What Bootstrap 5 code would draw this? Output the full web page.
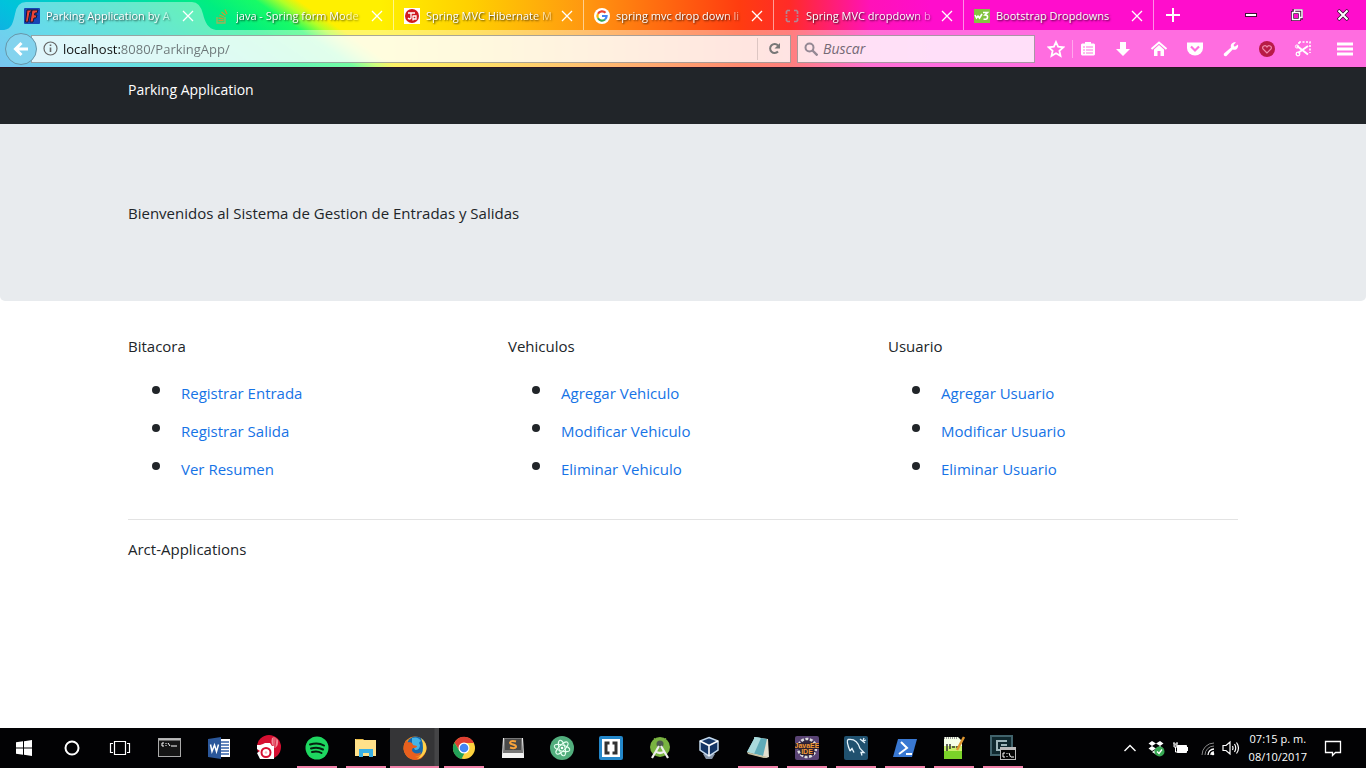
<!DOCTYPE html>
<html lang="es">
<head>
<meta charset="utf-8">
<meta name="viewport" content="width=device-width, initial-scale=1">
<title>Parking Application</title>
<link href="https://cdn.jsdelivr.net/npm/bootstrap@5.3.0/dist/css/bootstrap.min.css" rel="stylesheet">
<style>
body{font-family:"Open Sans","Noto Sans",sans-serif;font-size:15px;line-height:24px;color:#212529;background:#fff}
button{border:0;background:none;padding:0;color:inherit}
svg{display:block;flex:none}
/* browser chrome */
.chrome{border-bottom:1px solid #2a1424;
 background:
 linear-gradient(90deg,#fff0 0 380px,#ffd000 470px,#ff9a10 580px,#ff3c10 740px,#ff2b28 790px,#ff12b8 870px,#ff0dcc 930px),
 linear-gradient(34deg,#1f9fe8 0,#00c3dc 56px,#00d8b0 120px,#00ee80 170px,#18fb66 198px,#b0ff28 212px,#fff000 222px)}
.tabstrip{height:30px;padding-left:14px;font-size:11px;line-height:18px}
.btab{width:190px;height:30px;padding:2px 10px 0;color:#fff;position:relative}
.btab button{flex:none}
.btab a{color:#fff;text-decoration:none;text-shadow:1px 1px 2px #000c;white-space:nowrap;margin-left:6px;width:134px;-webkit-mask-image:linear-gradient(90deg,#000 106px,#0003 132px);mask-image:linear-gradient(90deg,#000 106px,#0003 132px)}
.btab a.whole{-webkit-mask-image:none;mask-image:none}
.btab svg.fav{width:16px;height:16px}
.divided{border-right:1px solid #fff8}
.btab.current::before{content:"";position:absolute;top:2px;left:-10px;width:212px;height:28px;background:#ffffff66;clip-path:path("M0 28C8 27 9 20 11 12Q13 0 22 0H188Q196 0 199 12C201 20 204 27 212 28Z")}
.btab.current>*{position:relative}
.winbtns{padding-right:17px;gap:34px}
.toolbar{height:37px;background:#ffffff66;padding:0 12px 0 5px}
.backbtn{width:32px;height:32px;border-radius:50%;background:#83d3ee;border:1px solid #6796a8;z-index:1;display:grid;place-items:center;flex:none}
.urlbar{height:28px;border:1px solid #0005;background:#ffffffc8;margin-left:-6px;padding-left:11px}
.urlbar input{border:0;outline:0;font-size:13px;line-height:20px;padding:0;margin-left:5px;min-width:0;color:#555;
 background:linear-gradient(90deg,#111 57px,#6c7678 57px);-webkit-background-clip:text;background-clip:text;-webkit-text-fill-color:transparent}
.reload{border-left:1px solid #0002;height:22px;width:33px;display:grid;place-items:center}
.searchbar{width:238px;height:28px;border:1px solid #0005;background:#ffffffc8;margin:0 12px 0 6px;padding-left:6px;gap:5px}
.searchbar input{border:0;outline:0;background:none;font-size:14px;font-style:italic;padding:0;min-width:0}
.searchbar input::placeholder{color:#756975;opacity:1}
.tools{color:#fff;gap:18px}
.tools .paired{border-left:1px solid #fff6;padding-left:7px;margin-left:-11px}
.tools .menu{margin-left:6px}
/* application */
.container{--bs-gutter-x:30px;max-width:1140px}
.row{--bs-gutter-x:30px}
.topbar{background:#212529;color:#fff;height:56px;padding-top:9px}
.topbar a{color:#fff;text-decoration:none;font-size:14px}
.hero{background:#e8ebee;border-radius:0 0 5px 5px;padding:77px 0 76px;margin-bottom:33px}
.links{list-style:none;margin:16px 0 31px;padding:0 0 0 24px}
.links li{display:flex;padding:7px 0}
.links li::before{content:"";width:8px;height:8px;border-radius:50%;background:#212529;margin:5px 21px 0 0}
.links a{color:#1673e6;text-decoration:none}
.rule{border:0;border-top:1px solid #e3e3e3;opacity:1;margin:0 0 17px}
/* desktop taskbar */
.taskbar{height:40px;background:#020204;color:#fff}
.taskbar .app{width:49px;height:40px;display:grid;place-items:center;flex:none;position:relative}
.taskbar .shell{width:48px}
.taskbar .shell+.app:not(.shell){margin-left:1px}
.taskbar .run::after{content:"";position:absolute;left:5px;right:4px;bottom:0;height:2px;background:#f080a8}
.taskbar .front{background:linear-gradient(90deg,#353537 44px,#454547 45px)}
.taskbar .front::after{left:0;right:0}
.tray{font-size:11px;line-height:18px;gap:7px;padding-right:24px}
.tray time{text-align:center;margin:0 10px 0 2px;white-space:nowrap}
</style>
</head>
<body class="d-flex flex-column min-vh-100">
<header class="chrome">
 <div class="tabstrip d-flex">
  <div class="btab current d-flex align-items-center">
   <svg class="fav" viewBox="0 0 16 16"><rect width="16" height="16" rx="1" fill="#1746b4"/><path d="M3 2h5l-1 2H6L4 14H1.500zM8 2h6l-1 3h-2l-.5 2H13l-1 3h-2l-1 4H6z" fill="#f04434" stroke="#181838"/></svg>
   <a href="#">Parking Application by A</a><button class="ms-auto" aria-label="Cerrar"><svg width="12" height="12"><path d="M1 1l10 10M11 1L1 11" stroke="#fff" stroke-width="1.3"/></svg></button></div>
  <div class="btab d-flex align-items-center divided">
   <svg class="fav" viewBox="0 0 16 16"><path d="M3 9v6h8V9" fill="none" stroke="#9fb05b" stroke-width="1.300"/><path d="M4.500 12.700h5M4.500 10l5 .8M5.500 7l4.500 2M7.500 4l4 3.200M11 1.500l2 4.500" stroke="#c89a30" stroke-width="1.300"/></svg>
   <a href="#">java - Spring form Mode</a><button class="ms-auto" aria-label="Cerrar"><svg width="12" height="12"><path d="M1 1l10 10M11 1L1 11" stroke="#fff" stroke-width="1.3"/></svg></button></div>
  <div class="btab d-flex align-items-center divided">
   <svg class="fav" viewBox="0 0 16 16"><rect width="16" height="16" fill="#fff"/><circle cx="8" cy="8" r="7" fill="#d01c22"/><path d="M4 5h7M7 5v5q-1 2-3 0M9 7.500v5M9 8h3v3H9" fill="none" stroke="#fff" stroke-width="1.300"/></svg>
   <a href="#">Spring MVC Hibernate M</a><button class="ms-auto" aria-label="Cerrar"><svg width="12" height="12"><path d="M1 1l10 10M11 1L1 11" stroke="#fff" stroke-width="1.3"/></svg></button></div>
  <div class="btab d-flex align-items-center divided">
   <svg class="fav" viewBox="0 0 16 16"><circle cx="8" cy="8" r="8" fill="#fff"/><g fill="none" stroke-width="2.200"><path d="M11.500 4.800A4.600 4.600 0 0 0 4 5.800" stroke="#ea4335"/><path d="M4 5.800a4.600 4.600 0 0 0 0 4.500" stroke="#fbbc05"/><path d="M4 10.300a4.600 4.600 0 0 0 7 1.200" stroke="#34a853"/><path d="M11 11.500Q12.600 10 12.600 8H8" stroke="#4285f4"/></g></svg>
   <a href="#">spring mvc drop down li</a><button class="ms-auto" aria-label="Cerrar"><svg width="12" height="12"><path d="M1 1l10 10M11 1L1 11" stroke="#fff" stroke-width="1.3"/></svg></button></div>
  <div class="btab d-flex align-items-center divided">
   <svg class="fav" viewBox="0 0 16 16"><path d="M6 2.500H3.500l-1 1V6M2.500 10v2.500l1 1H6M10 2.500h2.500l1 1V6M13.500 10v2.500l-1 1H10M2.500 7.300v1.400M13.500 7.300v1.400" fill="none" stroke="#b08a96" stroke-width="1.700"/></svg>
   <a href="#">Spring MVC dropdown b</a><button class="ms-auto" aria-label="Cerrar"><svg width="12" height="12"><path d="M1 1l10 10M11 1L1 11" stroke="#fff" stroke-width="1.3"/></svg></button></div>
  <div class="btab d-flex align-items-center divided">
   <svg class="fav" viewBox="0 0 16 16"><rect y="1" width="16" height="14" fill="#84c441"/><path d="M1 7l1.500 3L4 8l1.500 2L8 6M9 4.500h4.500L11 7q3 0 2.500 2.500T9.500 11" fill="none" stroke="#fff" stroke-width="1.600"/></svg>
   <a href="#" class="whole">Bootstrap Dropdowns</a><button class="ms-auto" aria-label="Cerrar"><svg width="12" height="12"><path d="M1 1l10 10M11 1L1 11" stroke="#fff" stroke-width="1.3"/></svg></button></div>
  <button class="ms-2 ps-1" aria-label="Nueva pestaña"><svg width="14" height="14"><path d="M7 0v14M0 7h14" stroke="#fff" stroke-width="2"/></svg></button>
  <div class="winbtns ms-auto d-flex align-items-center">
   <button aria-label="Minimizar"><svg width="12" height="12"><rect x=".5" y="4.500" width="11" height="3" fill="#fff" stroke="#401038"/></svg></button>
   <button aria-label="Restaurar"><svg width="12" height="12"><path d="M3 3V1h8v8H9M1.500 3.500h7v7h-7z" fill="none" stroke="#401038" stroke-width="3"/><path d="M3.500 3V1H11v7.500H9M1.500 3.500h7v7h-7z" fill="none" stroke="#fff" stroke-width="1.500"/></svg></button>
   <button aria-label="Cerrar ventana"><svg width="12" height="12"><path d="M1 1l10 10M11 1L1 11" stroke="#401038" stroke-width="3.600"/><path d="M1.500 1.500l9 9M10.500 1.500l-9 9" stroke="#fff" stroke-width="2"/></svg></button>
  </div>
 </div>
 <div class="toolbar d-flex align-items-center">
  <button class="backbtn" aria-label="Atrás"><svg width="16" height="16"><path d="M15 8H3M8.500 2L2.500 8l6 6" fill="none" stroke="#fff" stroke-width="3"/></svg></button>
  <div class="urlbar d-flex align-items-center flex-grow-1">
   <svg width="15" height="15"><circle cx="7.500" cy="7.500" r="6.500" fill="none" stroke="#666" stroke-width="1.200"/><path d="M7.500 6.500V11M7.500 3.500v1.600" stroke="#666" stroke-width="1.600"/></svg>
   <input class="flex-grow-1" type="text" aria-label="Dirección" value="localhost:8080/ParkingApp/">
   <button class="reload" aria-label="Recargar"><svg width="13" height="13"><path d="M10 9.500A4.500 4.500 0 1 1 10 3.500" fill="none" stroke="#777" stroke-width="2"/><path d="M12 1v5.500H6.500z" fill="#777"/></svg></button>
  </div>
  <div class="searchbar d-flex align-items-center">
   <svg width="14" height="14"><circle cx="5.500" cy="5.500" r="4" fill="none" stroke="#948894" stroke-width="2"/><path d="M8.500 8.500l5 5" stroke="#948894" stroke-width="2.400"/></svg>
   <input class="flex-grow-1" type="text" aria-label="Buscar" placeholder="Buscar">
  </div>
  <div class="tools d-flex align-items-center">
   <button aria-label="Marcador"><svg width="18" height="18"><path d="M9 2l2.100 4.700 5.200.6-3.900 3.500 1.100 5.100L9 13.300l-4.500 2.600 1.100-5.100-3.900-3.500 5.200-.6z" fill="none" stroke="#fff" stroke-width="1.800"/></svg></button>
   <button class="paired" aria-label="Lista"><svg width="16" height="18"><path d="M2 3.500h3V2h6v1.500h3l1 1v10l-1 1H2l-1-1v-10z" fill="#fff"/><path d="M3 7h2M6 7h7M3 10h2M6 10h7M3 13h2M6 13h7" stroke="#ff6fdf"/></svg></button>
   <button aria-label="Descargas"><svg width="18" height="18"><path d="M6 2h6v7h4l-7 7-7-7h4z" fill="#fff"/></svg></button>
   <button aria-label="Inicio"><svg width="18" height="18"><path d="M1.500 9L9 2.500 16.500 9" fill="none" stroke="#fff" stroke-width="2"/><path d="M4 9.500l5-4.500 5 4.500V16h-3.500v-5h-3v5H4z" fill="#fff"/></svg></button>
   <button aria-label="Pocket"><svg width="18" height="18"><path d="M1 2.500h16V8a8 7.500 0 0 1-16 0z" fill="#fff"/><path d="M5 6.500l4 4 4-4" fill="none" stroke="#ff6fdf" stroke-width="2.200"/></svg></button>
   <button aria-label="Herramientas"><svg width="18" height="18"><path d="M2 13.500L9 7.500C8 4 11 1.500 14 2.300L11.500 5l1.200 1.700L16 4.500c.7 4-2 6-5.300 5L4.500 16c-1.500 1-3.500-.800-2.500-2.500z" fill="#fff"/></svg></button>
   <button aria-label="Favorito"><svg width="18" height="18"><circle cx="9" cy="9" r="8" fill="#b81b46"/><path d="M9 13L5 9C3.500 6 7.500 4.500 9 7c1.500-2.500 5.500-1 4 2z" fill="none" stroke="#f18cae" stroke-width="1.200"/></svg></button>
   <button aria-label="Captura"><svg width="18" height="18"><path d="M5 2h11v11M5 2v3" fill="none" stroke="#fff" stroke-width="1.600" stroke-dasharray="2 1.500"/><path d="M3 6l11 8.500M14 6L4 13" stroke="#fff" stroke-width="2"/><circle cx="3" cy="6.500" r="1.600" fill="none" stroke="#fff"/><circle cx="4" cy="14" r="1.800" fill="none" stroke="#fff" stroke-width="1.300"/></svg></button>
   <button class="menu" aria-label="Menú"><svg width="18" height="18"><path d="M1 4h16M1 9h16M1 14h16" stroke="#fff" stroke-width="3"/></svg></button>
  </div>
 </div>
</header>

<nav class="topbar"><div class="container"><a href="#">Parking Application</a></div></nav>
<section class="hero"><div class="container"><p class="m-0">Bienvenidos al Sistema de Gestion de Entradas y Salidas</p></div></section>
<main class="container flex-grow-1">
 <div class="row">
  <div class="col-4"><p class="m-0">Bitacora</p>
   <ul class="links"><li><a href="#">Registrar Entrada</a></li><li><a href="#">Registrar Salida</a></li><li><a href="#">Ver Resumen</a></li></ul></div>
  <div class="col-4"><p class="m-0">Vehiculos</p>
   <ul class="links"><li><a href="#">Agregar Vehiculo</a></li><li><a href="#">Modificar Vehiculo</a></li><li><a href="#">Eliminar Vehiculo</a></li></ul></div>
  <div class="col-4"><p class="m-0">Usuario</p>
   <ul class="links"><li><a href="#">Agregar Usuario</a></li><li><a href="#">Modificar Usuario</a></li><li><a href="#">Eliminar Usuario</a></li></ul></div>
 </div>
 <hr class="rule">
 <p class="m-0">Arct-Applications</p>
</main>

<footer class="taskbar d-flex align-items-center">
 <button class="app shell" aria-label="Inicio"><svg width="16" height="16"><path d="M0 2.300l7-1V7.500H0zM8 1.200L16 0v7.500H8zM0 8.500h7v6.200l-7-1zM8 8.500h8V16l-8-1.200z" fill="#fff"/></svg></button>
 <button class="app shell" aria-label="Cortana"><svg width="16" height="16"><circle cx="8" cy="8" r="6.500" fill="none" stroke="#fff" stroke-width="2"/></svg></button>
 <button class="app shell" aria-label="Vista de tareas"><svg width="22" height="16"><path d="M5.500 1.500h11v13h-11zM4 3.500H1.500v9H4M18 3.500h2.500v9H18" fill="none" stroke="#fff" stroke-width="1.200"/></svg></button>
 <button class="app" aria-label="Consola"><svg width="24" height="20"><rect x=".5" y=".5" width="22" height="18" fill="#151515" stroke="#aaa"/><path d="M1 1.500h21" stroke="#bbb" stroke-width="2"/><path d="M6 5H4v3h2M8 5v1M8 7v1M10 5l2 3M13 8h6" fill="none" stroke="#fff"/></svg></button>
 <button class="app" aria-label="Word"><svg width="24" height="24"><path d="M11 3h12v18H11z" fill="#fff"/><path d="M14 6h8M14 9h8M14 12h8M14 15h8M14 18h8" stroke="#3461a8" stroke-width="1.300"/><path d="M1 3l13-2v22L1 21z" fill="#2b579a"/><path d="M3.500 8.500l1.500 7L7.500 9 9.500 15.500l2-7" fill="none" stroke="#fff" stroke-width="1.500"/></svg></button>
 <button class="app" aria-label="Cámara"><svg width="26" height="26"><circle cx="14" cy="12" r="12" fill="#d60f31"/><path d="M17 3q3-2 6 2 1 5-3 8-5-4-3-10" fill="#f08a96"/><path d="M19 3v9M21 3l-1 9" stroke="#d60f31" stroke-width=".7"/><path d="M2 10h3l3-1 2-1h5l2 3h2v13H5l-3-6 3-2-3-2z" fill="#fff"/><circle cx="11" cy="17.500" r="4.500" fill="#fff" stroke="#d60f31" stroke-width="2"/><circle cx="11" cy="17.500" r="1.300" fill="#f7b5bd"/></svg></button>
 <button class="app run" aria-label="Spotify"><svg width="24" height="24"><circle cx="12" cy="12" r="11.500" fill="#1ed760"/><path d="M5 8.500q8-2.500 14 1M6 12.500q6.500-2 12 1M7 16q5.500-1.500 9.500 1" fill="none" stroke="#06200f" stroke-width="2" stroke-linecap="round"/></svg></button>
 <button class="app run" aria-label="Explorador"><svg width="24" height="22"><path d="M1 2h8l1 1h12v16H1z" fill="#ffe18a"/><path d="M2 2.500h7" stroke="#e9b940"/><path d="M5 20v-8h14v8h-4v-4H9v4z" fill="#39b0e4"/></svg></button>
 <button class="app run front" aria-label="Firefox"><svg width="24" height="24"><circle cx="12" cy="12" r="11.500" fill="#f08a20"/><circle cx="13" cy="10" r="9.500" fill="#1668ad"/><path d="M9 2q6-2 9 3-3 1-1 4 0 5-5 5L9 8z" fill="#45b4e6"/><path d="M3 4q1 3 4 2 3 1 3 3l4 1q0 2-4 2-2 2 0 4 4 3 8 0-1 4-6 5 7 1 10-6-1 9-10 9Q2 23 .5 13 .500 8 3 4" fill="#e85f1e"/><path d="M18 2q7 6 5 13-3 7-9 8 6-4 6-11 0-6-2-10" fill="#ffd14a"/></svg></button>
 <button class="app run" aria-label="Chrome"><svg width="24" height="24"><circle cx="12" cy="12" r="11" fill="#fdd23e"/><path d="M2.500 6.500A11 11 0 0 1 22 7H12l-5 7z" fill="#df3f32"/><path d="M2.500 6.500L7.500 15l5 2-3 6A11 11 0 0 1 2.500 6.500" fill="#23a158"/><circle cx="12" cy="12" r="5.500" fill="#fff"/><circle cx="12" cy="12" r="4.300" fill="#4285f4"/></svg></button>
 <button class="app" aria-label="Sublime Text"><svg width="24" height="24"><path d="M2 2h20l1 17v3H1v-3z" fill="#f3f3f3"/><path d="M3 2h18l1 15H2z" fill="#777"/><path d="M4 3h16v11H4z" fill="#484848"/><path d="M15 5.500q-5-1.500-6 1 0 1.500 3 2 3.500 1 3 2.500-1 2-6 .5" fill="none" stroke="#f7a23b" stroke-width="2"/></svg></button>
 <button class="app" aria-label="Atom"><svg width="24" height="24"><circle cx="12" cy="12" r="12" fill="#52ae7d"/><g fill="none" stroke="#e6fff0"><ellipse cx="12" cy="12" rx="3" ry="8" transform="rotate(-15 12 12)"/><ellipse cx="12" cy="12" rx="3" ry="8" transform="rotate(45 12 12)"/><ellipse cx="12" cy="12" rx="3" ry="8" transform="rotate(105 12 12)"/></g><circle cx="12" cy="12" r="1.300" fill="#fff"/></svg></button>
 <button class="app" aria-label="Brackets"><svg width="24" height="24"><rect width="24" height="24" rx="2" fill="#2387ca"/><rect x="3" y="3" width="18" height="18" fill="#fff"/><path d="M10.500 7H7v10h3.500M13.500 7H17v10h-3.500" fill="none" stroke="#333" stroke-width="3"/></svg></button>
 <button class="app" aria-label="Android Studio"><svg width="24" height="24"><circle cx="12" cy="11" r="10" fill="#79b341"/><path d="M9 6l-3-4M15 6l3-4" stroke="#79b341"/><circle cx="12" cy="8" r="3.500" fill="#4d5a4d"/><path d="M11 10L4 22M13 10l7 12M7 15q5 4 10 0" fill="none" stroke="#eee" stroke-width="2.200"/></svg></button>
 <button class="app" aria-label="VirtualBox"><svg width="24" height="24"><path d="M6 18l6-3 6 3-3 5H9z" fill="#8795a8"/><path d="M12 1.500l9 3.500v9l-9 6-9-6V5z" fill="#133565" stroke="#c4d9ed" stroke-width="1.500"/><path d="M3 5l9 4.500L21 5M12 9.500V20" fill="none" stroke="#fff" stroke-width="1.600"/></svg></button>
 <button class="app run" aria-label="Bloc de notas"><svg width="24" height="24"><path d="M8 1l14 2 1 18-3 1-12-3z" fill="#e3dfcf"/><path d="M9 1l12 2-4 17-16-4z" fill="#5fabb8"/><path d="M9 1l6 1-7 16-7-2z" fill="#a9dadc"/><path d="M1 16l16 4 5 1-4 1-16-4z" fill="#c8c0a0"/></svg></button>
 <button class="app run" aria-label="Eclipse Java EE"><svg width="24" height="24"><rect width="24" height="24" rx="2" fill="#594374"/><circle cx="12" cy="12" r="9" fill="#302640" stroke="#ddd" stroke-width="2.500" stroke-dasharray="3 1.500"/><path d="M0 7h24v6h-5v6H6v-6H0z" fill="#2b2030"/><g fill="#f49a35" font-family="Liberation Sans,sans-serif" font-weight="700" font-size="7" text-anchor="middle"><text x="12" y="12">JavaEE</text><text x="12" y="18">IDE</text></g></svg></button>
 <button class="app run" aria-label="MySQL Workbench"><svg width="24" height="24"><rect width="24" height="24" rx="2" fill="#20516f"/><path d="M6 15Q2 5 4 3.500q9-1.500 12 9l4 4-3 0 1 3M6 15l2-2.500 2 4M16 3l5 4M20 2l-1 3 3-1" fill="none" stroke="#e7f4fc" stroke-width="1.300"/></svg></button>
 <button class="app run" aria-label="PowerShell"><svg width="24" height="20"><path d="M5 1h19l-5 18H0z" fill="#3978d2"/><path d="M8 4l6 6-8 6M13 16h6" fill="none" stroke="#fff" stroke-width="2"/></svg></button>
 <button class="app run" aria-label="Notepad++"><svg width="24" height="24"><path d="M2 1h14l4 4v18H2z" fill="#f6ffe8"/><path d="M2 14h18v9H2z" fill="#7bd329"/><path d="M2 10h18v5H2z" fill="#c9f06a"/><path d="M2 2h14" stroke="#999" stroke-width="2" stroke-dasharray="1 1"/><path d="M5 8v7M8 8v5M10 11h3M14 11h2" stroke="#333" stroke-width="1.500"/><path d="M22 1l-7 13" stroke="#df9730" stroke-width="2.500"/></svg></button>
 <button class="app run" aria-label="Terminal"><svg width="26" height="26"><rect x="1" y="1" width="21" height="19" fill="#10292f" stroke="#41636c" stroke-width="2"/><path d="M17 6H7v9h5M17 10h-6" fill="none" stroke="#9fb7bb" stroke-width="2"/><rect x="10.500" y="12.500" width="15" height="12" fill="#050505" stroke="#bbb"/><path d="M11 14h14" stroke="#bbb" stroke-width="2"/><path d="M15 18h-2v4h2M17 18v1M17 21v1M19 18l1.500 4M21 22h3" fill="none" stroke="#fff"/></svg></button>
 <div class="tray ms-auto d-flex align-items-center">
  <svg width="14" height="14"><path d="M1.500 10L7 4.500l5.500 5.500" fill="none" stroke="#fff" stroke-width="1.400"/></svg>
  <svg class="ms-1" width="17" height="17"><path d="M4 1l4 2.500L4 6 .500 3.500zM12 1l3.500 2.500L12 6 8 3.500zM4 6l4 2.500L4 11 .500 8.500zM12 6l3.500 2.500L12 11 8 8.500zM4 12l4-2.500 4 2.500-4 2.500z" fill="#fff"/><circle cx="11.500" cy="11.500" r="5" fill="#36a852"/><path d="M9 11.500l2 2 3-4" fill="none" stroke="#fff" stroke-width="1.300"/></svg>
  <svg width="17" height="14"><path d="M5.500 4.500h9v7h-9z" fill="#fff" stroke="#fff"/><path d="M15.500 6v4M1 3h5M2 1v2M5 1v2M2 4h3v2H2zM3.500 6v5H6" fill="none" stroke="#fff"/></svg>
  <svg class="ms-1" width="15" height="15"><g fill="none"><path d="M2 14A12 12 0 0 1 14 2M5 14a9 9 0 0 1 9-9" stroke="#888"/><path d="M8 14a6 6 0 0 1 6-6M11 14a3 3 0 0 1 3-3" stroke="#fff" stroke-width="1.300"/></g><circle cx="13" cy="13" r="1.300" fill="#fff"/></svg>
  <svg width="18" height="16"><path d="M1 5.500h3l4-3.500v12l-4-3.500H1zM10.500 6q1 2 0 4M12.500 4q2.500 4 0 8M14.500 2.500q4 5.500 0 11" fill="none" stroke="#fff" stroke-width="1.200"/></svg>
  <time datetime="2017-10-08T19:15">07:15 p. m.<br>08/10/2017</time>
  <button aria-label="Notificaciones"><svg width="18" height="18"><path d="M1.500 2.500h15v11h-5l-3 3v-3h-7z" fill="none" stroke="#fff" stroke-width="1.300"/></svg></button>
 </div>
</footer>
<script src="https://cdn.jsdelivr.net/npm/bootstrap@5.3.0/dist/js/bootstrap.bundle.min.js"></script>
</body>
</html>
